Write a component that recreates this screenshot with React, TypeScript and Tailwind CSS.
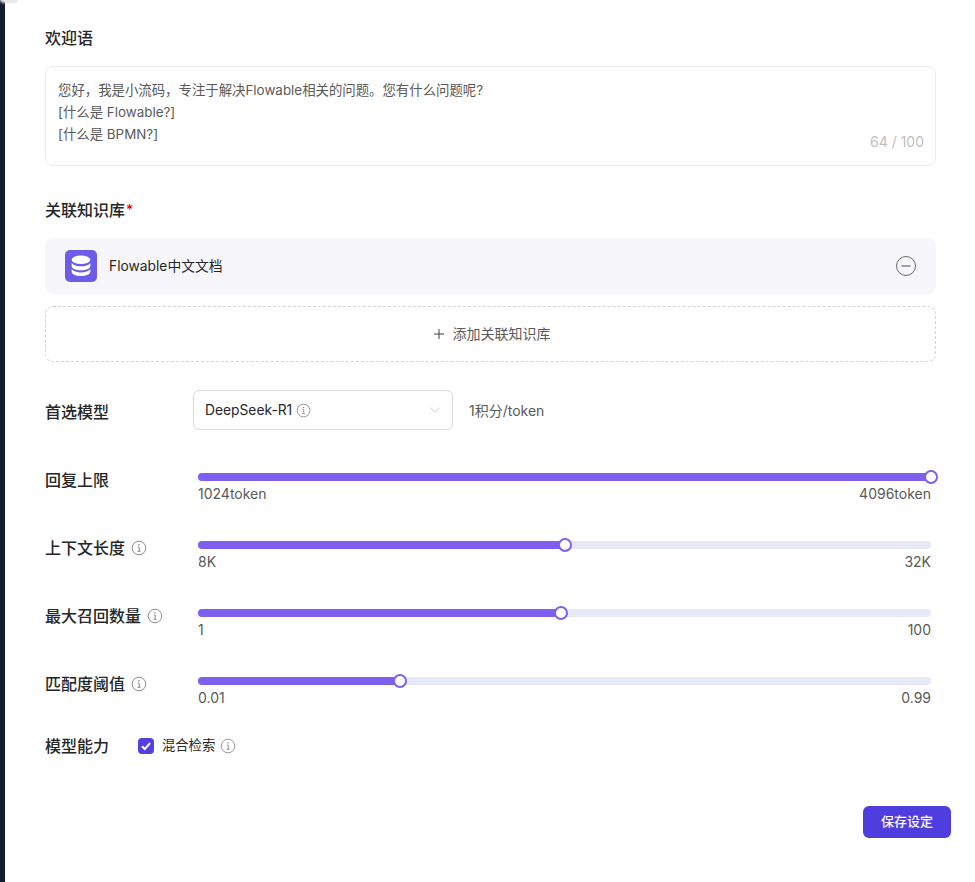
import { ChevronDown, Plus } from 'lucide-react';

const font = { fontFamily: 'Inter, "Noto Sans CJK SC", sans-serif' };

function InfoIcon({ className = 'w-[16px] h-[16px] text-[#808080]' }: { className?: string }) {
  return (
    <svg viewBox="0 0 16 16" fill="none" stroke="currentColor" className={className}>
      <circle cx="8" cy="8" r="6.800" strokeWidth="0.9" />
      <path d="M6.800 7h1.400v4.300M6.600 11.300h3" strokeWidth="0.9" />
      <circle cx="8" cy="4.800" r="0.8" fill="currentColor" stroke="none" />
    </svg>
  );
}

function DatabaseIcon() {
  return (
    <div className="w-[32px] h-[32px] rounded-[5px] bg-[#6c5ce7] flex items-center justify-center">
      <svg viewBox="0 0 20 20" className="w-[24px] h-[24px]" fill="white">
        <ellipse cx="10" cy="4.800" rx="7.800" ry="3.600" />
        <path d="M2.200 7.400c1.400 1.900 4.400 2.900 7.800 2.900s6.400-1 7.800-2.900v2.500c0 2-3.500 3.600-7.800 3.600s-7.800-1.600-7.800-3.600z" />
        <path d="M2.200 12.500c1.400 1.900 4.400 2.900 7.800 2.900s6.400-1 7.800-2.900v2.300c0 2-3.500 3.600-7.800 3.600s-7.800-1.600-7.800-3.600z" />
      </svg>
    </div>
  );
}

interface SliderRowProps {
  label: string;
  info?: boolean;
  percent: number;
  min: string;
  max: string;
}

function SliderRow({ label, info, percent, min, max }: SliderRowProps) {
  return (
    <div className="flex h-[68px]">
      <div className="w-[153px] h-[24px] flex items-center gap-[6px] text-[16px] font-medium text-[#262626]">
        {label}
        {info && <InfoIcon />}
      </div>
      <div className="flex-1 pr-[5px]">
        <div className="relative h-[8px] mt-[5px] rounded-full bg-[#e8e9f6]">
          <div className="h-full rounded-full bg-[#7f5fee]" style={{ width: `${percent}%` }} />
          <div
            className="absolute top-[-3px] w-[14px] h-[14px] ml-[-7px] rounded-full bg-white border-2 border-[#7f5fee]"
            style={{ left: `${percent}%` }}
          />
        </div>
        <div className="flex justify-between mt-[3px] text-[14px] leading-[20px] text-[#595959]">
          <span>{min}</span>
          <span>{max}</span>
        </div>
      </div>
    </div>
  );
}

export default function App() {
  return (
    <div className="relative flex h-[882px] bg-[#141c30] overflow-hidden" style={font}>
      <div className="absolute left-0 top-[-5px] w-[18px] h-[8px] rounded-full bg-[#e6e6e6] blur-[1px]" />
      <div className="flex-1 ml-[5px] bg-white pl-[40px] pr-[24px] pt-[28px]">
        <div className="pr-[15px]">
          <div className="text-[16px] leading-[20px] font-medium text-[#262626]">欢迎语</div>
          <div className="relative mt-[18px] h-[100px] rounded-[8px] border border-[#ececec] px-[12px] py-[12px] text-[13.4px] leading-[22px] text-[#595959]">
            <div>您好，我是小流码，专注于解决Flowable相关的问题。您有什么问题呢?</div>
            <div>[什么是 Flowable?]</div>
            <div>[什么是 BPMN?]</div>
            <span className="absolute right-[11px] bottom-[13px] text-[14px] leading-[20px] text-[#bfbfbf]">64 / 100</span>
          </div>

          <div className="mt-[34px] h-[20px] flex text-[16px] leading-[20px] font-medium text-[#262626]">
            关联知识库<span className="text-[14px] leading-[20px] text-[#f00000] ml-[1px]">*</span>
          </div>
          <div className="mt-[18px] h-[56px] rounded-[8px] bg-[#f7f7fb] flex items-center pl-[20px] pr-[20px]">
            <DatabaseIcon />
            <span className="ml-[12px] text-[13.8px] text-[#262626]">Flowable中文文档</span>
            <svg viewBox="0 0 20 20" fill="none" className="ml-auto w-[20px] h-[20px]">
              <circle cx="10" cy="10" r="9.500" stroke="#595959" strokeWidth="0.9" />
              <path d="M5.500 10h9" stroke="#8c8c8c" strokeWidth="1.600" />
            </svg>
          </div>
          <div className="mt-[12px] h-[56px] rounded-[8px] border border-dashed border-[#d4d4d4] flex items-center justify-center gap-[6px] text-[14px] text-[#595959] pb-[1px]">
            <Plus className="w-[16px] h-[16px] text-[#404040]" strokeWidth={1.500} />
            添加关联知识库
          </div>

          <div className="mt-[28px] flex items-center h-[40px]">
            <div className="w-[148px] text-[16px] font-medium text-[#262626] pt-[4px]">首选模型</div>
            <div className="w-[260px] h-[40px] rounded-[6px] border border-[#d9d9d9] flex items-center pl-[11px] pr-[8px] text-[13.8px] text-[#262626]">
              <span>DeepSeek-R1</span>
              <InfoIcon className="ml-[4px] w-[15px] h-[15px] text-[#8c8c8c]" />
              <ChevronDown className="ml-auto w-[18px] h-[18px] text-[#bfbfbf]" strokeWidth={1} />
            </div>
            <span className="ml-[16px] text-[14px] text-[#595959]">1积分/token</span>
          </div>

          <div className="mt-[38px]">
            <SliderRow label="回复上限" percent={100} min="1024token" max="4096token" />
            <SliderRow label="上下文长度" info percent={50} min="8K" max="32K" />
            <SliderRow label="最大召回数量" info percent={49.500} min="1" max="100" />
            <SliderRow label="匹配度阈值" info percent={27.600} min="0.01" max="0.99" />
          </div>

          <div className="flex items-center h-[24px] mt-[-6px]">
            <div className="w-[93px] text-[16px] font-medium text-[#262626]">模型能力</div>
            <div className="w-[16px] h-[16px] rounded-[4px] bg-[#5340e0] flex items-center justify-center">
              <svg viewBox="0 0 12 12" fill="none" className="w-[14px] h-[14px]">
                <path d="M2.500 6.200l2.400 2.400 4.600-5" stroke="white" strokeWidth="1.700" />
              </svg>
            </div>
            <span className="ml-[8px] text-[13.300px] text-[#262626]">混合检索</span>
            <InfoIcon className="ml-[5px] w-[16px] h-[16px] text-[#8c8c8c]" />
          </div>
        </div>

        <div className="flex justify-end mt-[48px]">
          <button className="w-[88px] h-[32px] rounded-[6px] bg-[#4f3ddf] text-white text-[13px] font-medium">
            保存设定
          </button>
        </div>
      </div>
    </div>
  );
}
